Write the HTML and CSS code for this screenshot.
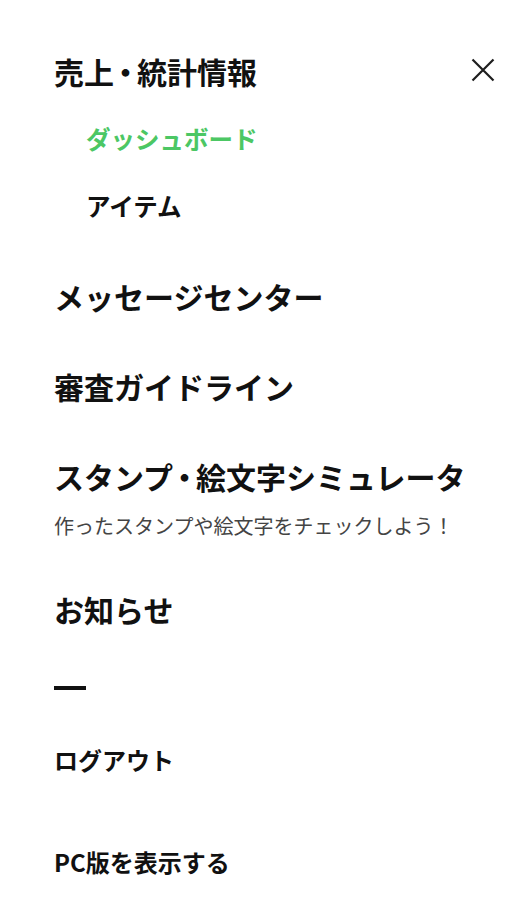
FILE: index.html
```html
<!DOCTYPE html>
<html lang="ja">
<head>
<meta charset="utf-8">
<title>Menu</title>
<link rel="stylesheet" href="styles.css">
</head>
<body>
<nav class="drawer">
  <ul class="menu">
    <li class="section">
      <div class="head-row">
        <span class="heading">売上<span class="dot">・</span>統計情報</span>
        <button class="close" aria-label="閉じる">
          <svg width="24" height="24" viewBox="0 0 24 24"><path d="M1.5 1.5 L22.5 22.5 M22.5 1.5 L1.5 22.5" stroke="#1e1e1e" stroke-width="2.2" fill="none"/></svg>
        </button>
      </div>
      <ul class="sub">
        <li class="sub-item active">ダッシュボード</li>
        <li class="sub-item">アイテム</li>
      </ul>
    </li>
    <li class="section"><span class="heading">メッセージセンター</span></li>
    <li class="section"><span class="heading">審査ガイドライン</span></li>
    <li class="section">
      <span class="heading">スタンプ<span class="dot">・</span>絵文字シミュレータ</span>
      <p class="desc">作ったスタンプや絵文字をチェックしよう！</p>
    </li>
    <li class="section"><span class="heading">お知らせ</span></li>
  </ul>
  <div class="divider"></div>
  <ul class="links">
    <li class="link">ログアウト</li>
    <li class="link">PC版を表示する</li>
  </ul>
</nav>
</body>
</html>
```
FILE: styles.css
```css
html, body {
  margin: 0;
  padding: 0;
  background: #fff;
}
body {
  font-family: "Noto Sans CJK JP", "Noto Sans", sans-serif;
  color: #111;
}
ul {
  list-style: none;
  margin: 0;
  padding: 0;
}
.drawer {
  padding: 49px 25px 0 54px;
}
.menu {
  display: flex;
  flex-direction: column;
  gap: 46px;
}
.section {
  display: flex;
  flex-direction: column;
}
.head-row {
  display: flex;
  justify-content: space-between;
  align-items: center;
}
.heading {
  display: block;
  font-size: 30px;
  font-weight: 700;
  line-height: 44px;
  color: #111;
}
.dot {
  font-feature-settings: "palt";
  padding: 0 4px;
}
.close {
  border: 0;
  background: none;
  padding: 0;
  margin: 0 0 2px 0;
  width: 24px;
  height: 24px;
  display: flex;
}
.sub {
  display: flex;
  flex-direction: column;
  gap: 23px;
  padding: 24px 0 0 32px;
}
.sub-item {
  font-size: 24.5px;
  font-weight: 700;
  line-height: 44px;
  color: #111;
}
.sub-item.active {
  color: #4cc764;
}
.desc {
  margin: 13px 0 0 0;
  font-size: 20px;
  line-height: 30px;
  color: #444;
  font-weight: 400;
}
.divider {
  width: 32px;
  height: 4px;
  background: #111;
  margin-top: 55px;
}
.links {
  display: flex;
  flex-direction: column;
  gap: 66px;
  margin-top: 52px;
}
.link {
  font-size: 24px;
  font-weight: 700;
  line-height: 36px;
  color: #111;
}
```
